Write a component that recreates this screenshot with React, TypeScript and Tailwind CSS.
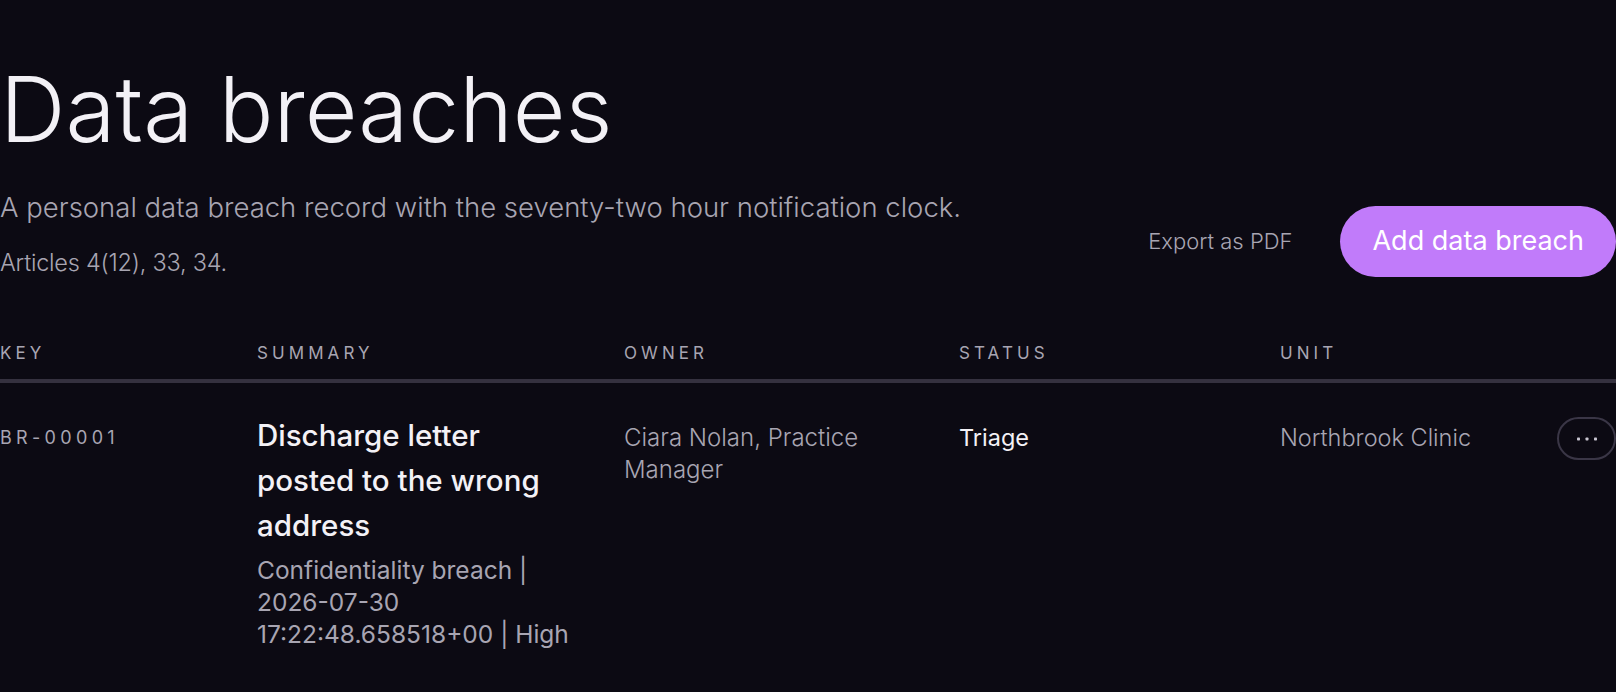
const cols = 'grid grid-cols-[257px_367px_335px_321px_1fr_59px]'

export default function App() {
    return (
        <div className="min-h-screen bg-[#0c0a13] font-['Inter','Noto_Sans',sans-serif] overflow-hidden">
            <div className="pt-16">
                <div className="flex items-end justify-between">
                    <div>
                        <h1 className="text-[91px] leading-[90px] font-light text-[#f3f1f6]">Data breaches</h1>
                        <p className="mt-[33px] text-[27.5px] leading-[40px] font-light text-[#a8a5b2]">
                            A personal data breach record with the seventy-two hour notification clock.
                        </p>
                        <p className="mt-[20px] text-[23.5px] leading-[32px] font-light tracking-[-0.01em] text-[#a8a5b2]">Articles 4(12), 33, 34.</p>
                    </div>
                    <div className="flex items-center gap-[48px] mb-[2px]">
                        <button className="text-[22px] font-light text-[#a8a5b2]">Export as PDF</button>
                        <button className="h-[71px] px-[32px] rounded-full bg-[#c17bfa] text-white text-[27px]">
                            Add data breach
                        </button>
                    </div>
                </div>

                {/* table */}
                <div className="mt-[62px]">
                    <div className={`${cols} pb-[14px] border-b-4 border-[#35313f] text-[17px] leading-[24px] tracking-[0.24em] text-[#a8a5b2]`}>
                        <div>KEY</div>
                        <div>SUMMARY</div>
                        <div>OWNER</div>
                        <div>STATUS</div>
                        <div>UNIT</div>
                        <div></div>
                    </div>
                    <div className={`${cols} pt-[33px] items-start`}>
                        <div className="mt-[6px] text-[18px] leading-[32px] tracking-[0.24em] text-[#a8a5b2]">BR-00001</div>
                        <div className="-mt-[3px]">
                            <div className="pr-[54px] text-[29.5px] leading-[45px] font-medium text-[#f3f1f6]">
                                Discharge letter posted to the wrong address
                            </div>
                            <div className="mt-[6px] pr-[36px] text-[24.5px] leading-[32px] text-[#a8a5b2]">
                                Confidentiality breach | <span className="whitespace-nowrap">2026-07-30</span> <span className="whitespace-nowrap">17:22:48.658518+00 | High</span>
                            </div>
                        </div>
                        <div className="mt-[6px] pr-12 text-[24px] leading-[32px] font-light text-[#a8a5b2]">
                            Ciara Nolan, Practice Manager
                        </div>
                        <div className="mt-[6px] text-[23.5px] leading-[32px] text-[#f3f1f6]">Triage</div>
                        <div className="mt-[6px] text-[23.5px] leading-[32px] font-light text-[#a8a5b2]">Northbrook Clinic</div>
                        <div className="mt-[1px]">
                            <button className="w-[59px] h-[43px] rounded-full border-2 border-[#3a3646] flex items-center justify-center">
                                <svg width="22" height="4" viewBox="0 0 22 4" fill="#c9c6d1">
                                    <rect x="1" y="0.5" width="3" height="3" rx="0.8" />
                                    <rect x="9.5" y="0.5" width="3" height="3" rx="0.8" />
                                    <rect x="18" y="0.5" width="3" height="3" rx="0.8" />
                                </svg>
                            </button>
                        </div>
                    </div>
                </div>
            </div>
        </div>
    )
}
